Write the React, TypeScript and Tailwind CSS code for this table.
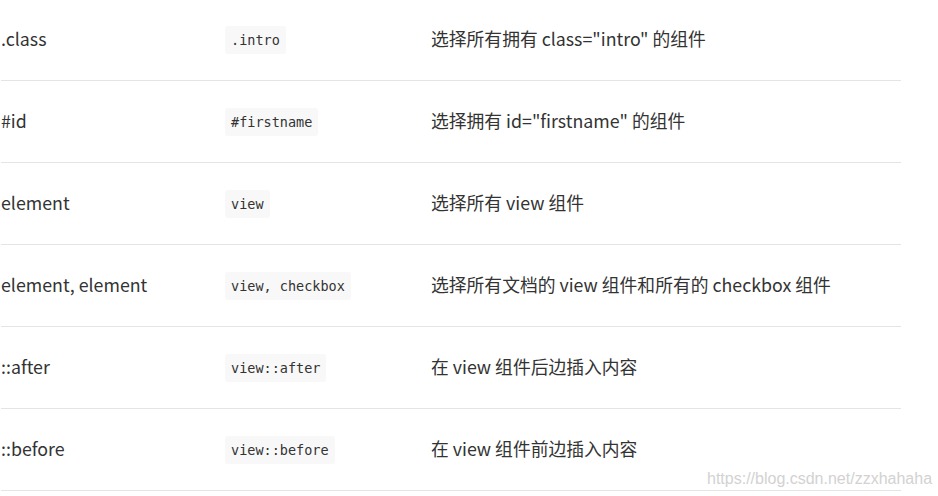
const rows = [
  { selector: '.class', example: '.intro', desc: '选择所有拥有 class="intro" 的组件' },
  { selector: '#id', example: '#firstname', desc: '选择拥有 id="firstname" 的组件' },
  { selector: 'element', example: 'view', desc: '选择所有 view 组件' },
  { selector: 'element, element', example: 'view, checkbox', desc: '选择所有文档的 view 组件和所有的 checkbox 组件' },
  { selector: '::after', example: 'view::after', desc: '在 view 组件后边插入内容' },
  { selector: '::before', example: 'view::before', desc: '在 view 组件前边插入内容' },
];

const App = () => {
  return (
    <div className="relative w-[938px] h-[496px] overflow-hidden bg-white font-['Microsoft_YaHei','Noto_Sans_CJK_SC',sans-serif] text-[#333333]">
      <div className="ml-px -mt-px w-[900px]">
        {rows.map((row) => (
          <div
            key={row.selector}
            className="flex h-[82px] items-center border-b border-[#e4e4e4]"
          >
            <div className="w-[224px] pb-[1px] text-[17.8px] leading-none">{row.selector}</div>
            <div className="w-[206px]">
              <code className="inline-block rounded-[3px] bg-[#f8f8f8] px-[6px] py-[6px] font-['DejaVu_Sans_Mono',monospace] text-[13.5px] leading-4 text-[#333333]">
                {row.example}
              </code>
            </div>
            <div className="pb-[1px] text-[17.8px] leading-none">{row.desc}</div>
          </div>
        ))}
      </div>
      <div className="absolute left-[707px] top-[467px] font-['Liberation_Sans',sans-serif] text-[16px] text-[#d2d2d2]">
        https://blog.csdn.net/zzxhahaha
      </div>
    </div>
  );
};

export default App;
